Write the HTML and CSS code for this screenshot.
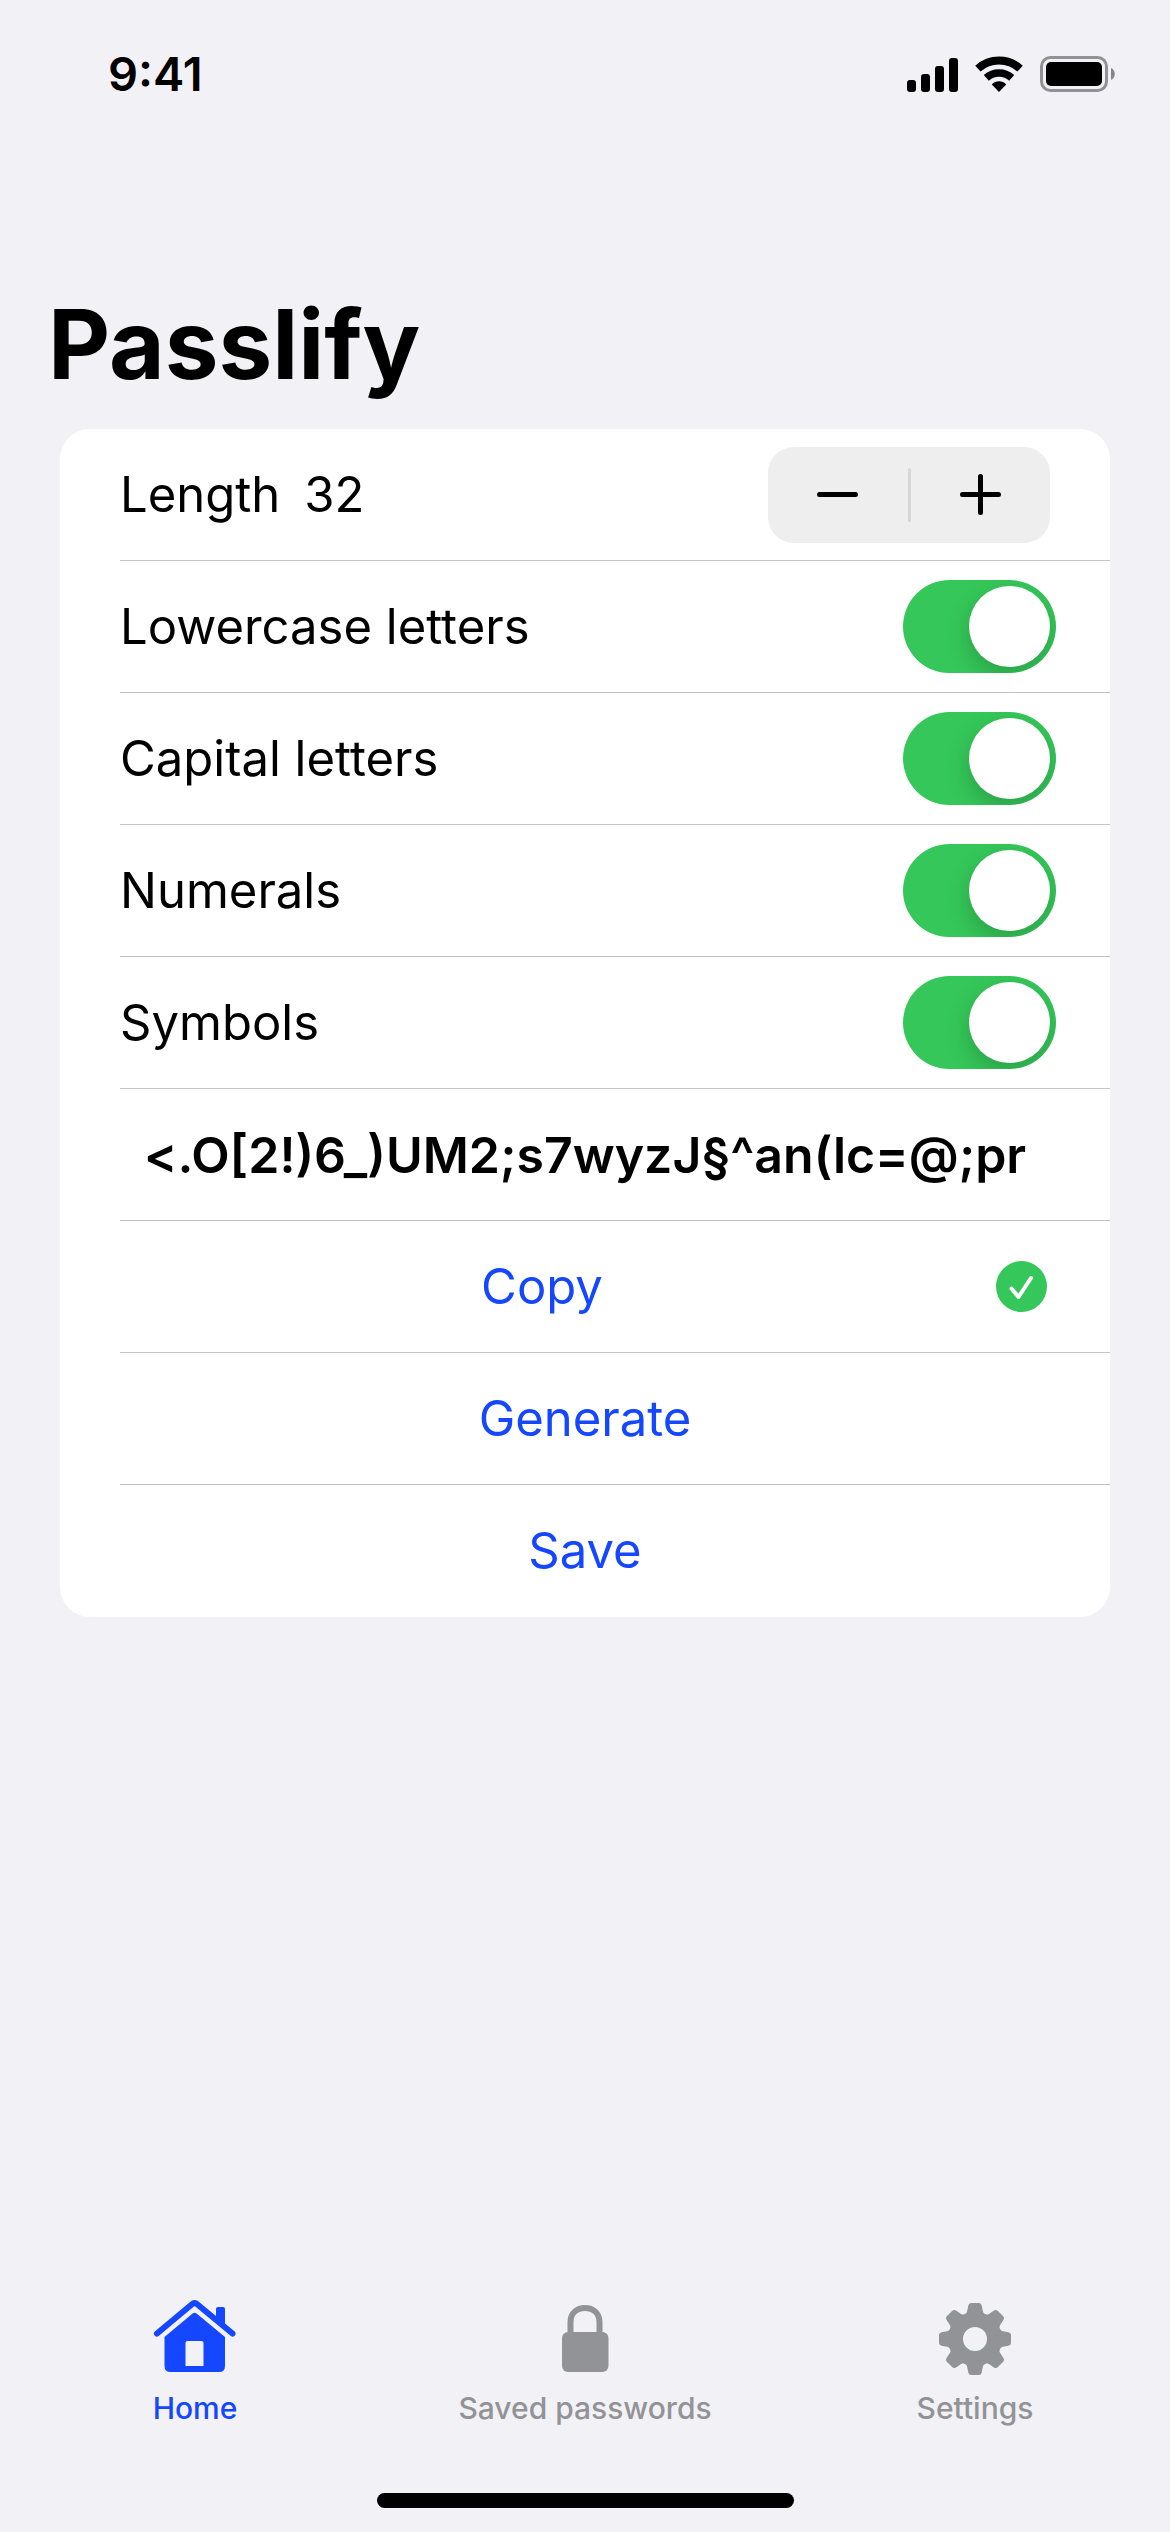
FILE: index.html
```html
<!DOCTYPE html>
<html lang="en">
<head>
<meta charset="utf-8">
<meta name="viewport" content="width=device-width">
<title>Passlify</title>
<link rel="stylesheet" href="styles.css">
</head>
<body>
<header class="status">
  <time class="clock">9:41</time>
  <div class="status-icons">
    <svg width="51" height="36" viewBox="0 0 51 36" aria-hidden="true"><rect y="24" width="9" height="12" rx="3"/><rect x="14" y="18" width="9" height="18" rx="3"/><rect x="28" y="10" width="9" height="26" rx="3"/><rect x="42" y="2" width="9" height="34" rx="3"/></svg>
    <svg width="48" height="36" viewBox="0 0 48 36" aria-hidden="true"><g fill="none" stroke="#000"><path d="M2.9 12.6A31.5 31.5 0 0 1 45.1 12.6" stroke-width="8"/><path d="M11.3 21.9A19 19 0 0 1 36.7 21.9" stroke-width="7.5"/></g><path d="M24 36L16.8 28.4C20.5 24.2 27.5 24.2 31.2 28.4Z"/></svg>
    <svg width="75" height="36" viewBox="0 0 75 36" aria-hidden="true"><rect x="1.5" y="1.5" width="65" height="33" rx="9" fill="none" stroke="#929295" stroke-width="3"/><rect x="6" y="6" width="56" height="24" rx="5"/><path d="M71 12C76 14 76 22 71 24Z" fill="#858588"/></svg>
  </div>
</header>
<main class="main">
  <h1 class="title">Passlify</h1>
  <form class="card">
    <div class="row">
      <span class="length">Length <output>32</output></span>
      <div class="stepper">
        <button type="button" class="step" aria-label="Decrease length"><svg width="41" height="41" viewBox="0 0 41 41"><path d="M2.5 20.5H38.5"/></svg></button>
        <span class="step-divider"></span>
        <button type="button" class="step" aria-label="Increase length"><svg width="41" height="41" viewBox="0 0 41 41"><path d="M2.5 20.5H38.5M20.5 2.5V38.5"/></svg></button>
      </div>
    </div>
    <div class="row"><label for="lower">Lowercase letters</label><input class="toggle" type="checkbox" role="switch" id="lower" checked></div>
    <div class="row"><label for="capital">Capital letters</label><input class="toggle" type="checkbox" role="switch" id="capital" checked></div>
    <div class="row"><label for="numerals">Numerals</label><input class="toggle" type="checkbox" role="switch" id="numerals" checked></div>
    <div class="row"><label for="symbols">Symbols</label><input class="toggle" type="checkbox" role="switch" id="symbols" checked></div>
    <div class="row"><output class="password">&lt;.O[2!)6_)UM2;s7wyzJ§^an(lc=@;pr</output></div>
    <div class="row row-copy">
      <button type="button" class="action">Copy</button>
      <svg width="51" height="51" viewBox="0 0 51 51" role="img" aria-label="Copied"><circle cx="25.5" cy="25.5" r="25.5" fill="#35c759"/><path d="M15.500 27.500L22.500 36L35 17" fill="none" stroke="#fff" stroke-width="4" stroke-linecap="round" stroke-linejoin="round"/></svg>
    </div>
    <div class="row"><button type="button" class="action">Generate</button></div>
    <div class="row"><button type="button" class="action">Save</button></div>
  </form>
</main>
<nav class="tabs">
  <a class="tab tab-active" href="#home" aria-current="page">
    <svg width="84" height="76" viewBox="22 20 84 76" aria-hidden="true"><path d="M26 53.500L61 24.200Q63.600 22 66.200 24.200L101.500 53.500" fill="none" stroke="currentColor" stroke-width="6" stroke-linecap="round"/><path d="M85 40V29Q85 27 87 27H92Q94 27 94 29V47Z"/><path fill-rule="evenodd" d="M33.500 57L61.600 33.500Q63.600 32 65.600 33.500L94 57V86Q94 92 88 92H39.500Q33.500 92 33.500 86ZM56.500 61Q54.500 61 54.500 63V86H72.500V63Q72.500 61 70.500 61Z"/></svg>
    Home
  </a>
  <a class="tab" href="#saved">
    <svg width="84" height="76" viewBox="102 20 84 76" aria-hidden="true"><rect x="121" y="52" width="46.500" height="40" rx="6"/><path d="M129.500 55V42C129.500 33 136 28 144 28S158.500 33 158.500 42V55" fill="none" stroke="currentColor" stroke-width="6"/></svg>
    Saved passwords
  </a>
  <a class="tab" href="#settings">
    <svg width="84" height="76" viewBox="-42 -39 84 76" aria-hidden="true"><defs><path id="tooth" d="M-9.500 -25Q-8.200 -26 -7.800 -28L-6.700 -33.500Q-6.200 -36 -4 -36H4Q6.200 -36 6.700 -33.500L7.800 -28Q8.200 -26 9.500 -25L0 -20Z"/></defs><circle r="19.500" fill="none" stroke="currentColor" stroke-width="15"/><use href="#tooth"/><use href="#tooth" transform="rotate(45)"/><use href="#tooth" transform="rotate(90)"/><use href="#tooth" transform="rotate(135)"/><use href="#tooth" transform="rotate(180)"/><use href="#tooth" transform="rotate(225)"/><use href="#tooth" transform="rotate(270)"/><use href="#tooth" transform="rotate(315)"/></svg>
    Settings
  </a>
</nav>
<div class="home-indicator"></div>
</body>
</html>
```

FILE: styles.css
```css
* { box-sizing: border-box; }

body {
  margin: 0;
  min-height: 100vh;
  display: flex;
  flex-direction: column;
  background: #f2f1f6;
  color: #000;
  font-family: Inter, "Liberation Sans", sans-serif;
  font-size: 49px;
  line-height: 60px;
}

svg { display: block; flex: none; }

button {
  border: 0;
  padding: 0;
  background: none;
  color: inherit;
  font: inherit;
}

.status {
  display: flex;
  justify-content: space-between;
  align-items: center;
  padding: 44px 55px 0 108px;
}

.clock { font-size: 47px; font-weight: 600; }

.status-icons { display: flex; gap: 17px; }

.main { flex: 1; padding: 180px 60px 0; }

.title {
  margin: 0 -12px 25px;
  font-size: 96px;
  line-height: 120px;
  font-weight: 700;
}

.card {
  background: #fff;
  border-radius: 30px;
  overflow: hidden;
}

.row {
  display: flex;
  align-items: center;
  justify-content: space-between;
  min-height: 132px;
  margin-left: 60px;
  padding-right: 60px;
  border-bottom: 1px solid #c4c4c6;
}

.row:last-child { border-bottom: 0; }

.length { display: flex; gap: 24px; }

.stepper {
  display: flex;
  align-items: center;
  width: 282px;
  height: 96px;
  border-radius: 26px;
  background: #eee;
}

.step {
  flex: 1;
  height: 96px;
  display: flex;
  align-items: center;
  justify-content: center;
}

.step svg { fill: none; stroke: #000; stroke-width: 5; stroke-linecap: round; }

.step-divider {
  width: 3px;
  height: 54px;
  border-radius: 2px;
  background: #d6d6d7;
}

.toggle {
  appearance: none;
  flex: none;
  width: 153px;
  height: 93px;
  margin: 0 -6px 0 0;
  padding: 6px;
  display: flex;
  border-radius: 47px;
  background: #35c759;
  overflow: hidden;
}

.toggle::before {
  content: "";
  width: 81px;
  height: 81px;
  border-radius: 50%;
  background: #fff;
  box-shadow: 0 9px 24px rgba(0, 0, 0, 0.2);
}

.toggle:checked { justify-content: flex-end; }

.password {
  flex: 1;
  text-align: center;
  font-size: 50px;
  font-weight: 600;
  white-space: nowrap;
}

.row-copy { gap: 32px; padding-right: 63px; }

.action { flex: 1; min-height: 131px; color: #1447ff; }

.tabs { display: grid; grid-template-columns: repeat(3, 1fr); }

.tab {
  display: flex;
  flex-direction: column;
  align-items: center;
  gap: 12px;
  color: #929397;
  fill: currentColor;
  font-size: 30px;
  line-height: 40px;
  font-weight: 500;
  text-decoration: none;
}

.tab-active { color: #1447ff; }

.home-indicator {
  width: 417px;
  height: 15px;
  margin: 65px auto 24px;
  border-radius: 8px;
  background: #000;
}
```
